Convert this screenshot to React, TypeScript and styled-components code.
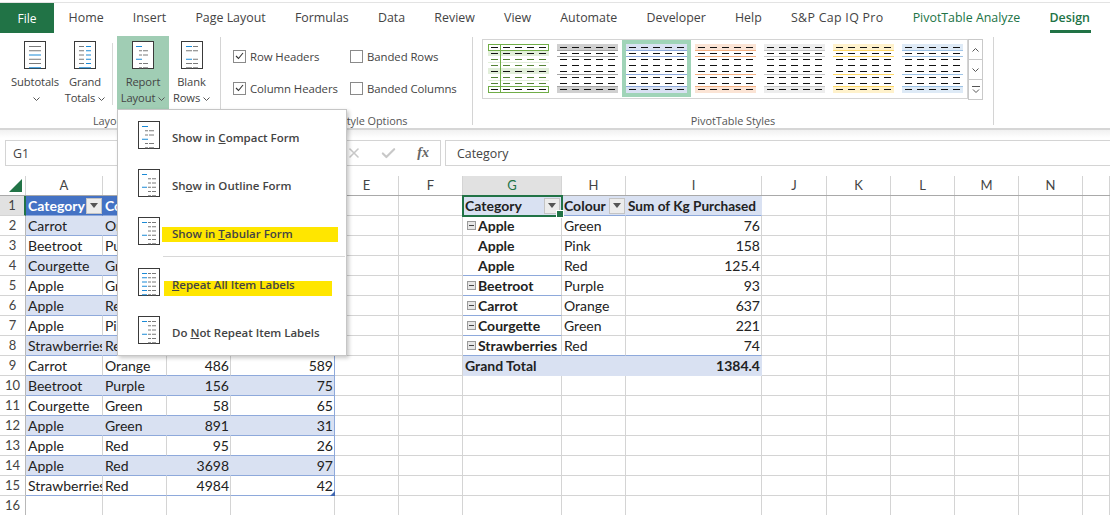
import React from "react";
import styled, { createGlobalStyle } from "styled-components";
import { X, Check } from "lucide-react";

const Global = createGlobalStyle`
  html, body { margin: 0; padding: 0; background: #fff; overflow: hidden; }
  * { box-sizing: border-box; }
`;

const UI = `"Open Sans", "Noto Sans", "Liberation Sans", sans-serif`;
const CELL = `Lato, "Liberation Sans", sans-serif`;
const GREEN = "#217346";

const Page = styled.div`
  position: relative;
  width: 1110px;
  height: 515px;
  overflow: hidden;
  background: #fff;
  display: flex;
  flex-direction: column;
  font-family: ${UI};
`;

const TabBar = styled.div`
  height: 33px;
  flex: none;
  margin-top: 2px;
  border-top: 1px solid #e3e3e3;
  display: flex;
  align-items: stretch;
  background: #fff;
`;
const FileTab = styled.div`
  width: 54px;
  background: ${GREEN};
  color: #fff;
  font-size: 12px;
  display: flex;
  align-items: center;
  justify-content: center;
  height: 30px;
`;
const Tab = styled.div<{ $green?: boolean; $active?: boolean; $wide?: boolean }>`
  position: relative;
  height: 30px;
  display: flex;
  align-items: center;
  padding: 0 14.6px 1px;
  white-space: nowrap;
  font-size: 12.4px;
  letter-spacing: ${(p) => (p.$wide ? "0.3px" : "0")};
  color: ${(p) => (p.$green ? GREEN : "#444")};
  font-weight: ${(p) => (p.$active ? 600 : 400)};
  ${(p) =>
    p.$active
      ? `&::after { content: ""; position: absolute; left: 15px; right: 14px; bottom: 0; height: 3px; background: ${GREEN}; }`
      : ""}
`;

const Ribbon = styled.div`
  height: 95px;
  flex: none;
  display: flex;
  align-items: flex-start;
  background: #fff;
  border-bottom: 2px solid #d6d6d6;
`;
const Group = styled.div<{ $width: number }>`
  width: ${(p) => p.$width}px;
  height: 88px;
  margin-top: 2px;
  border-right: 1px solid #d4d4d4;
  display: flex;
  flex-direction: column;
`;
const GroupBody = styled.div`
  height: 77px;
  flex: none;
  display: flex;
  align-items: flex-start;
`;
const GroupLabel = styled.div`
  height: 14px;
  line-height: 14px;
  text-align: center;
  font-size: 10.9px;
  letter-spacing: -0.03px;
  color: #555;
  white-space: nowrap;
`;
const RibbonButton = styled.div<{ $width: number; $on?: boolean }>`
  width: ${(p) => p.$width}px;
  height: 73px;
  margin-top: -1px;
  padding-top: 5px;
  flex: none;
  display: flex;
  flex-direction: column;
  align-items: center;
  background: ${(p) => (p.$on ? "#a0cdb4" : "transparent")};
  font-size: 11.2px;
  letter-spacing: -0.1px;
  color: #444;
`;
const ButtonText = styled.div`
  margin-top: 5px;
  line-height: 16px;
  text-align: center;
  white-space: nowrap;
`;
const ShortRule = styled.div`
  width: 1px;
  height: 62px;
  margin: 6px 4px 0 4px;
  background: #d8d8d8;
  flex: none;
`;
const Options = styled.div`
  padding: 3px 0 0 12px;
  display: grid;
  grid-template-columns: 117px auto;
  grid-auto-rows: 32px;
`;
const Option = styled.div`
  display: flex;
  align-items: center;
  gap: 4px;
  font-size: 11.4px;
  letter-spacing: -0.08px;
  color: #444;
  white-space: nowrap;
`;
const Box = styled.span`
  width: 13px;
  height: 13px;
  border: 1px solid #8a8a8a;
  background: #fff;
  display: flex;
  align-items: center;
  justify-content: center;
  flex: none;
`;
const Gallery = styled.div`
  margin: 2px 0 0 9px;
  display: flex;
`;
const ThumbRow = styled.div`
  width: 486px;
  height: 60px;
  border: 1px solid #d4d4d4;
  padding: 4px 0 0 5px;
  display: flex;
  gap: 8px;
  align-items: flex-start;
`;
const ThumbFrame = styled.div<{ $on?: boolean }>`
  width: 61px;
  height: 49px;
  flex: none;
  display: flex;
  ${(p) => (p.$on ? "box-shadow: 0 0 0 4px #a0d4b8;" : "")}
`;
const ScrollColumn = styled.div`
  width: 15px;
  height: 60px;
  display: flex;
  flex-direction: column;
`;
const ScrollButton = styled.div`
  flex: 1;
  border: 1px solid #c9c9c9;
  margin-bottom: -1px;
  display: flex;
  align-items: center;
  justify-content: center;
  background: #fff;
`;

const FormulaBar = styled.div`
  height: 46px;
  flex: none;
  padding: 10px 0 0 5px;
  display: flex;
  gap: 4px;
  align-items: flex-start;
  background: linear-gradient(#f1f1f1, #fff 8px);
`;
const NameBox = styled.div`
  width: 190px;
  height: 26px;
  border: 1px solid #d4d4d4;
  background: #fff;
  padding-left: 7px;
  font-size: 12.4px;
  line-height: 25px;
  color: #444;
`;
const FxBox = styled.div`
  width: 242px;
  height: 26px;
  border: 1px solid #d4d4d4;
  background: #fff;
  display: flex;
  align-items: center;
  justify-content: flex-end;
  gap: 18px;
  padding-right: 11px;
  color: #c8c8c8;
`;
const FxText = styled.span`
  font-family: "Liberation Serif", serif;
  font-style: italic;
  font-weight: 700;
  font-size: 14px;
  color: #666;
  margin-left: 2px;
`;
const FormulaInput = styled.div`
  flex: 1;
  height: 26px;
  border: 1px solid #d4d4d4;
  border-right: 0;
  background: #fff;
  padding-left: 11px;
  font-size: 12.4px;
  line-height: 25px;
  color: #444;
`;

const COLUMNS = "26px 77px 64px 64px 104px 64px 64px 99px 64px 136px 65px 64px 64px 64px 64px 27px";

const Sheet = styled.div`
  flex: none;
  font-family: ${CELL};
  font-size: 14px;
  color: #222;
`;
const HeaderRow = styled.div`
  display: grid;
  grid-template-columns: ${COLUMNS};
  height: 20px;
  border-bottom: 1px solid #a9a9a9;
`;
const ColHead = styled.div<{ $on?: boolean }>`
  border-right: 1px solid #d4d4d4;
  text-align: center;
  line-height: 18px;
  font-size: 13px;
  color: ${(p) => (p.$on ? GREEN : "#444")};
  background: ${(p) => (p.$on ? "#e1e1e1" : "#fff")};
`;
const Corner = styled.div`
  border-right: 1px solid #d4d4d4;
  display: flex;
  align-items: flex-end;
  justify-content: flex-end;
  padding: 0 3px 3px 0;
`;
const Row = styled.div`
  display: grid;
  grid-template-columns: ${COLUMNS};
  height: 20px;
`;
const RowHead = styled.div<{ $on?: boolean }>`
  text-align: center;
  line-height: 19px;
  font-size: 13px;
  color: #444;
  background: ${(p) => (p.$on ? "#e1e1e1" : "#fff")};
  border-bottom: 1px solid #d4d4d4;
  border-right: ${(p) => (p.$on ? `2px solid ${GREEN}` : "1px solid #b8b8b8")};
`;
const Cell = styled.div<{
  $fill?: string;
  $bold?: boolean;
  $right?: boolean;
  $white?: boolean;
  $under?: string;
  $edge?: string;
  $noline?: boolean;
  $tight?: boolean;
}>`
  min-width: 0;
  overflow: hidden;
  white-space: nowrap;
  display: flex;
  align-items: center;
  justify-content: ${(p) => (p.$right ? "flex-end" : "flex-start")};
  padding: 0 ${(p) => (p.$tight ? 0 : 1)}px 0 2px;
  background: ${(p) => p.$fill || "#fff"};
  font-weight: ${(p) => (p.$bold ? 700 : 400)};
  color: ${(p) => (p.$white ? "#fff" : "#222")};
  border-bottom: 1px solid ${(p) => p.$under || "#d4d4d4"};
  border-right: 1px solid ${(p) => p.$edge || (p.$noline ? "transparent" : "#d4d4d4")};
`;
const Label = styled.span`
  flex: 1;
  min-width: 0;
  overflow: hidden;
`;
const SumLabel = styled.span`
  font-size: 13.6px;
`;
const Filter = styled.span`
  width: 16px;
  height: 16px;
  flex: none;
  border: 1px solid #c4c4c4;
  background: #ececec;
  display: flex;
  align-items: center;
  justify-content: center;
`;
const Indent = styled.span`
  width: 13px;
  flex: none;
  display: flex;
  align-items: center;
  padding-left: 2px;
`;
const Collapse = styled.span`
  width: 9px;
  height: 9px;
  border: 1px solid #9a9a9a;
  background: #e6e6e6;
  display: flex;
  align-items: center;
  justify-content: center;
  &::after { content: ""; width: 5px; height: 1px; background: #444; }
`;
const Active = styled.div`
  position: absolute;
  left: 462px;
  top: 195px;
  width: 101px;
  height: 22px;
  border: 2px solid ${GREEN};
  pointer-events: none;
  &::after {
    content: "";
    position: absolute;
    right: -3px;
    bottom: -3px;
    width: 6px;
    height: 6px;
    background: ${GREEN};
    border: 1px solid #fff;
  }
`;
const TableCorner = styled.div`
  position: absolute;
  left: 330px;
  top: 491px;
  width: 5px;
  height: 5px;
  background: #3f67b1;
  clip-path: polygon(100% 0, 100% 100%, 0 100%);
`;

const Menu = styled.div`
  position: absolute;
  left: 117px;
  top: 109px;
  width: 230px;
  height: 247px;
  background: #fff;
  border: 1px solid #c6c6c6;
  box-shadow: 2px 2px 4px rgba(0, 0, 0, 0.22);
  padding-top: 6px;
  display: flex;
  flex-direction: column;
`;
const MenuItem = styled.div<{ $gap?: number }>`
  position: relative;
  height: 44px;
  margin-bottom: ${(p) => p.$gap ?? 4}px;
  padding-left: 20px;
  display: flex;
  align-items: center;
  gap: 12px;
  font-size: 11.5px;
  font-weight: 600;
  color: #444;
  white-space: nowrap;
  letter-spacing: -0.02px;
`;
const MenuIcon = styled.span`
  display: flex;
  margin-bottom: 6px;
  flex: none;
  position: relative;
`;
const MenuText = styled.span`
  position: relative;
  margin-bottom: 2px;
`;
const Marker = styled.span<{ $left: number; $top: number; $width: number }>`
  position: absolute;
  left: ${(p) => p.$left}px;
  top: ${(p) => p.$top}px;
  width: ${(p) => p.$width}px;
  height: 15px;
  background: #ffe600;
`;
const MenuRule = styled.div`
  height: 1px;
  margin: -4px 1px 6px 45px;
  background: #d8d8d8;
  flex: none;
`;

type Seg = [number, number, string?];
const G = "#7a7a7a";
const B = "#1b8ad6";

const Doc = ({ rows }: { rows: Seg[][] }) => (
  <svg width="22" height="28" viewBox="0 0 22 28">
    <rect x="0.5" y="0.5" width="21" height="27" fill="#fff" stroke="#3a3a3a" />
    {rows.map((segs, i) =>
      segs.map((s, j) => (
        <line key={`${i}-${j}`} x1={s[0]} x2={s[1]} y1={5.5 + i * 4.25} y2={5.5 + i * 4.25} stroke={s[2] || G} strokeWidth="1" />
      ))
    )}
  </svg>
);

const ICONS: Record<string, Seg[][]> = {
  subtotals: [
    [[5, 17]],
    [[5, 17]],
    [[5, 17, B]],
    [[5, 17]],
    [[5, 17]],
    [[5, 17, B]],
  ],
  grand: [
    [[5, 10], [12, 17, B]],
    [[5, 10], [12, 17, B]],
    [[5, 10], [12, 17, B]],
    [[5, 10], [12, 17, B]],
    [[5, 10], [12, 17, B]],
    [[5, 17, B]],
  ],
  compact: [
    [[4, 10, B]],
    [[7, 10], [11, 16]],
    [[7, 10], [11, 16]],
    [[4, 10, B]],
    [[7, 10], [11, 16]],
    [[7, 10], [11, 16]],
  ],
  outline: [
    [[4, 9, B]],
    [[10, 13], [14, 18]],
    [[10, 13], [14, 18]],
    [[4, 9, B], [10, 13], [14, 18]],
    [[10, 13], [14, 18]],
    [[10, 13], [14, 18]],
  ],
  tabular: [
    [[4, 9, B], [10, 13], [14, 18]],
    [[10, 13], [14, 18]],
    [[10, 13], [14, 18]],
    [[4, 9, B], [10, 13], [14, 18]],
    [[10, 13], [14, 18]],
    [[10, 13], [14, 18]],
  ],
  repeat: [
    [[4, 9, B], [10, 13], [14, 18]],
    [[4, 9, B], [10, 13], [14, 18]],
    [[4, 9, B], [10, 13], [14, 18]],
    [[4, 9, B], [10, 13], [14, 18]],
    [[4, 9, B], [10, 13], [14, 18]],
    [[4, 9, B], [10, 13], [14, 18]],
  ],
  blank: [
    [[5, 11, B], [12, 17]],
    [[5, 11], [12, 17]],
    [[5, 11, "#fff"]],
    [[5, 11, B], [12, 17]],
    [[5, 11], [12, 17]],
    [[5, 11], [12, 17]],
  ],
};

const ChevronMark = styled.svg`
  display: inline-block;
  vertical-align: middle;
  margin-left: 3px;
`;
const Chevron = () => (
  <ChevronMark width="7" height="4" viewBox="0 0 7 4">
    <path d="M0.5 0.5 L3.5 3.5 L6.5 0.5" fill="none" stroke="#555" strokeWidth="1" />
  </ChevronMark>
);
const LeadSpace = styled.div`
  width: 8px;
  flex: none;
`;

const FilterGlyph = () => (
  <svg width="8" height="5" viewBox="0 0 8 5">
    <path d="M0 0H8L4 5Z" fill="#555" />
  </svg>
);

const DASH_ROWS = [3, 9, 15, 21, 27, 33, 39, 45];
const DASH_X = [3, 15, 27, 39, 51];

const StyleThumb = ({ band, line }: { band: string; line: string }) => (
  <svg width="61" height="49" viewBox="0 0 61 49">
    <rect width="61" height="6" fill={band} />
    <rect y="43" width="61" height="6" fill={band} />
    {[6, 12, 30, 42].map((y) => (
      <rect key={y} y={y} width="61" height="1" fill={line} />
    ))}
    {DASH_ROWS.map((y) =>
      DASH_X.map((x) => <rect key={`${x}-${y}`} x={x} y={y} width="7" height="1" fill="#111" />)
    )}
  </svg>
);

const GreenThumb = () => (
  <svg width="61" height="49" viewBox="0 0 61 49">
    <rect y="6" width="61" height="6" fill="#e2efda" />
    <rect y="24" width="61" height="6" fill="#e2efda" />
    <rect y="18" width="61" height="1" fill="#e2efda" />
    <rect y="36" width="61" height="1" fill="#e2efda" />
    {DASH_ROWS.map((y) =>
      DASH_X.map((x) => (
        <rect key={`${x}-${y}`} x={x} y={y} width="7" height="1" fill={[3, 9, 27, 45].includes(y) ? "#111" : "#548235"} />
      ))
    )}
    <rect x="12" y="0" width="1" height="49" fill="#70ad47" />
    <rect x="0.5" y="0.5" width="60" height="6" fill="none" stroke="#70ad47" />
    <rect x="0.5" y="42.5" width="60" height="6" fill="none" stroke="#70ad47" />
  </svg>
);

const CheckGlyph = () => (
  <svg width="9" height="8" viewBox="0 0 9 8">
    <path d="M1 4 L3.5 6.5 L8 1" fill="none" stroke="#333" strokeWidth="1.1" />
  </svg>
);

const TABS = ["Home", "Insert", "Page Layout", "Formulas", "Data", "Review", "View", "Automate", "Developer", "Help"];
const HEADS = ["A", "B", "C", "D", "E", "F", "G", "H", "I", "J", "K", "L", "M", "N", ""];

const TABLE: [string, string, string, string][] = [
  ["Carrot", "Orange", "", ""],
  ["Beetroot", "Purple", "", ""],
  ["Courgette", "Green", "", ""],
  ["Apple", "Green", "", ""],
  ["Apple", "Red", "", ""],
  ["Apple", "Pink", "", ""],
  ["Strawberries", "Red", "", ""],
  ["Carrot", "Orange", "486", "589"],
  ["Beetroot", "Purple", "156", "75"],
  ["Courgette", "Green", "58", "65"],
  ["Apple", "Green", "891", "31"],
  ["Apple", "Red", "95", "26"],
  ["Apple", "Red", "3698", "97"],
  ["Strawberries", "Red", "4984", "42"],
];

const PIVOT: [string, string, string, boolean, boolean][] = [
  ["Apple", "Green", "76", true, false],
  ["Apple", "Pink", "158", false, false],
  ["Apple", "Red", "125.4", false, true],
  ["Beetroot", "Purple", "93", true, true],
  ["Carrot", "Orange", "637", true, true],
  ["Courgette", "Green", "221", true, true],
  ["Strawberries", "Red", "74", true, true],
];

const BAND = "#d9e1f2";
const LINE = "#8ea9db";

const Blanks = ({ n }: { n: number }) => (
  <>
    {Array.from({ length: n }, (_, i) => (
      <Cell key={i} />
    ))}
  </>
);

export default function App() {
  return (
    <Page>
      <Global />
      <TabBar>
        <FileTab>File</FileTab>
        {TABS.map((t) => (
          <Tab key={t}>{t}</Tab>
        ))}
        <Tab $wide>S&amp;P Cap IQ Pro</Tab>
        <Tab $green>PivotTable Analyze</Tab>
        <Tab $green $active>Design</Tab>
      </TabBar>

      <Ribbon>
        <Group $width={221}>
          <GroupBody>
            <LeadSpace />
            <RibbonButton $width={54}>
              <Doc rows={ICONS.subtotals} />
              <ButtonText>
                Subtotals
                <br />
                <Chevron />
              </ButtonText>
            </RibbonButton>
            <RibbonButton $width={46}>
              <Doc rows={ICONS.grand} />
              <ButtonText>
                Grand
                <br />
                Totals
                <Chevron />
              </ButtonText>
            </RibbonButton>
            <ShortRule />
            <RibbonButton $width={52} $on>
              <Doc rows={ICONS.compact} />
              <ButtonText>
                Report
                <br />
                Layout
                <Chevron />
              </ButtonText>
            </RibbonButton>
            <RibbonButton $width={45}>
              <Doc rows={ICONS.blank} />
              <ButtonText>
                Blank
                <br />
                Rows
                <Chevron />
              </ButtonText>
            </RibbonButton>
          </GroupBody>
          <GroupLabel>Layout</GroupLabel>
        </Group>

        <Group $width={252}>
          <GroupBody>
            <Options>
              <Option>
                <Box><CheckGlyph /></Box>
                Row Headers
              </Option>
              <Option>
                <Box />
                Banded Rows
              </Option>
              <Option>
                <Box><CheckGlyph /></Box>
                Column Headers
              </Option>
              <Option>
                <Box />
                Banded Columns
              </Option>
            </Options>
          </GroupBody>
          <GroupLabel>PivotTable Style Options</GroupLabel>
        </Group>

        <Group $width={521}>
          <GroupBody>
            <Gallery>
              <ThumbRow>
                <ThumbFrame><GreenThumb /></ThumbFrame>
                <ThumbFrame><StyleThumb band="#d0d0d0" line="#a5a5a5" /></ThumbFrame>
                <ThumbFrame $on><StyleThumb band="#d9e1f2" line="#8eaadb" /></ThumbFrame>
                <ThumbFrame><StyleThumb band="#fbe4d5" line="#f4b183" /></ThumbFrame>
                <ThumbFrame><StyleThumb band="#ededed" line="#c9c9c9" /></ThumbFrame>
                <ThumbFrame><StyleThumb band="#fff2cc" line="#ffd966" /></ThumbFrame>
                <ThumbFrame><StyleThumb band="#deeaf6" line="#9dc3e6" /></ThumbFrame>
              </ThumbRow>
              <ScrollColumn>
                <ScrollButton>
                  <svg width="7" height="4" viewBox="0 0 7 4"><path d="M0.5 3.5 L3.5 0.5 L6.5 3.5" fill="none" stroke="#555" /></svg>
                </ScrollButton>
                <ScrollButton>
                  <svg width="7" height="4" viewBox="0 0 7 4"><path d="M0.5 0.5 L3.5 3.5 L6.5 0.5" fill="none" stroke="#555" /></svg>
                </ScrollButton>
                <ScrollButton>
                  <svg width="8" height="8" viewBox="0 0 8 8"><path d="M0 0.5H8M1 3.5 L4 6.5 L7 3.5" fill="none" stroke="#555" /></svg>
                </ScrollButton>
              </ScrollColumn>
            </Gallery>
          </GroupBody>
          <GroupLabel>PivotTable Styles</GroupLabel>
        </Group>
      </Ribbon>

      <FormulaBar>
        <NameBox>G1</NameBox>
        <FxBox>
          <X size={16} strokeWidth={2.4} />
          <Check size={17} strokeWidth={3} />
          <FxText>fx</FxText>
        </FxBox>
        <FormulaInput>Category</FormulaInput>
      </FormulaBar>

      <Sheet>
        <HeaderRow>
          <Corner>
            <svg width="13" height="13" viewBox="0 0 13 13"><path d="M13 0V13H0Z" fill={GREEN} /></svg>
          </Corner>
          {HEADS.map((h, i) => (
            <ColHead key={i} $on={h === "G"}>{h}</ColHead>
          ))}
        </HeaderRow>

        <Row>
          <RowHead $on>1</RowHead>
          <Cell $fill="#4472c4" $bold $white $noline $tight $under={LINE}>
            <Label>Category</Label>
            <Filter><FilterGlyph /></Filter>
          </Cell>
          <Cell $fill="#4472c4" $bold $white $noline $under={LINE}>Colour</Cell>
          <Cell $fill="#4472c4" $bold $white $noline $under={LINE} />
          <Cell $fill="#4472c4" $bold $white $noline $under={LINE} $edge={LINE} />
          <Blanks n={2} />
          <Cell $fill={BAND} $bold $noline $under={LINE}>
            <Label>Category</Label>
            <Filter><FilterGlyph /></Filter>
          </Cell>
          <Cell $fill={BAND} $bold $noline $tight $under={LINE}>
            <Label>Colour</Label>
            <Filter><FilterGlyph /></Filter>
          </Cell>
          <Cell $fill={BAND} $bold $noline $under={LINE}><SumLabel>Sum of Kg Purchased</SumLabel></Cell>
          <Blanks n={6} />
        </Row>

        {Array.from({ length: 15 }, (_, i) => {
          const t = TABLE[i];
          const p = PIVOT[i];
          const band = i % 2 === 0 ? BAND : undefined;
          const isGrand = i === 7;
          return (
            <Row key={i}>
              <RowHead>{i + 2}</RowHead>
              {t ? (
                <>
                  <Cell $fill={band} $noline={!!band} $under={LINE}>{t[0]}</Cell>
                  <Cell $fill={band} $noline={!!band} $under={LINE}>{t[1]}</Cell>
                  <Cell $fill={band} $noline={!!band} $under={LINE} $right>{t[2]}</Cell>
                  <Cell $fill={band} $under={LINE} $edge={LINE} $right>{t[3]}</Cell>
                </>
              ) : (
                <Blanks n={4} />
              )}
              <Blanks n={2} />
              {p ? (
                <>
                  <Cell $bold $under={p[4] ? LINE : undefined}>
                    <Indent>{p[3] && <Collapse />}</Indent>
                    {p[0]}
                  </Cell>
                  <Cell $under={i === 6 ? LINE : undefined}>{p[1]}</Cell>
                  <Cell $right $under={i === 6 ? LINE : undefined}>{p[2]}</Cell>
                </>
              ) : isGrand ? (
                <>
                  <Cell $fill={BAND} $bold $noline $under={BAND}>Grand Total</Cell>
                  <Cell $fill={BAND} $noline $under={BAND} />
                  <Cell $fill={BAND} $bold $right $noline $under={BAND}>1384.4</Cell>
                </>
              ) : (
                <Blanks n={3} />
              )}
              <Blanks n={6} />
            </Row>
          );
        })}
      </Sheet>

      <Active />
      <TableCorner />

      <Menu>
        <MenuItem>
          <MenuIcon><Doc rows={ICONS.compact} /></MenuIcon>
          <MenuText>Show in <u>C</u>ompact Form</MenuText>
        </MenuItem>
        <MenuItem>
          <MenuIcon><Doc rows={ICONS.outline} /></MenuIcon>
          <MenuText>Sh<u>o</u>w in Outline Form</MenuText>
        </MenuItem>
        <MenuItem>
          <Marker $left={44} $top={15} $width={176} />
          <MenuIcon><Doc rows={ICONS.tabular} /></MenuIcon>
          <MenuText>Show in <u>T</u>abular Form</MenuText>
        </MenuItem>
        <MenuRule />
        <MenuItem>
          <Marker $left={46} $top={18} $width={168} />
          <MenuIcon><Doc rows={ICONS.repeat} /></MenuIcon>
          <MenuText><u>R</u>epeat All Item Labels</MenuText>
        </MenuItem>
        <MenuItem $gap={0}>
          <MenuIcon><Doc rows={ICONS.tabular} /></MenuIcon>
          <MenuText>Do <u>N</u>ot Repeat Item Labels</MenuText>
        </MenuItem>
      </Menu>
    </Page>
  );
}
